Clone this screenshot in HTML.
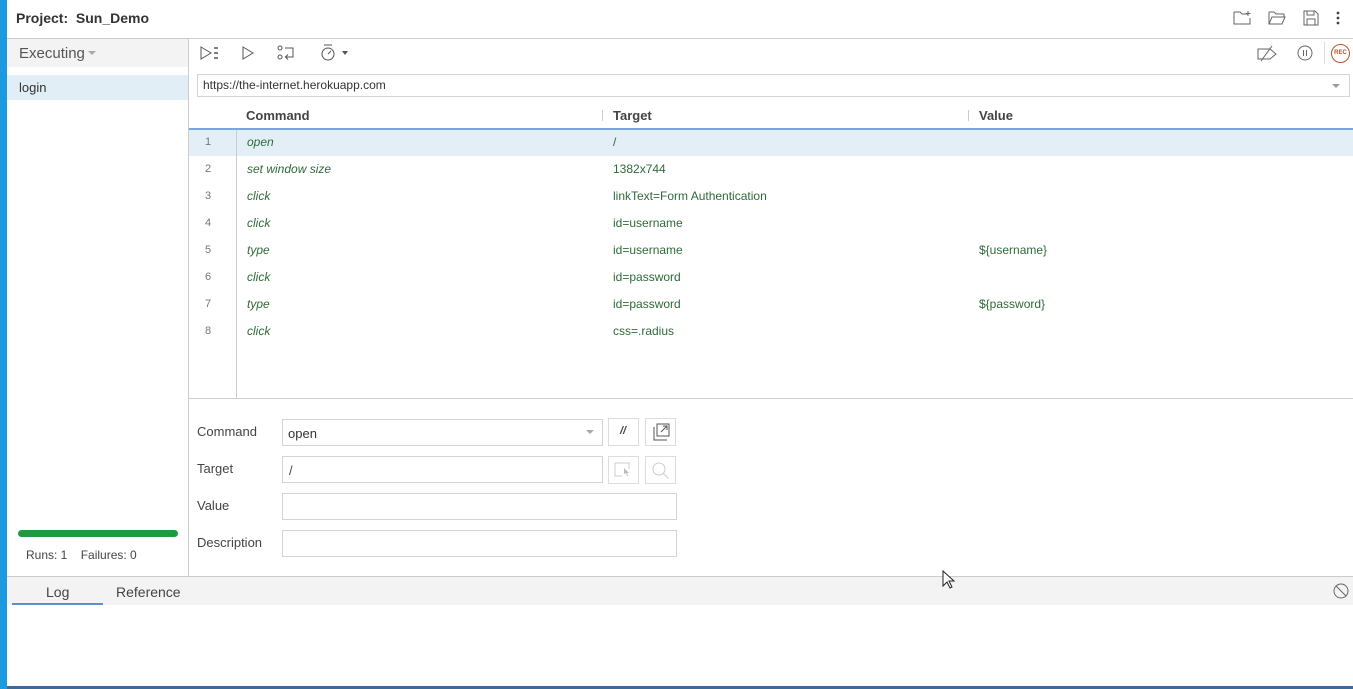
<!DOCTYPE html>
<html><head><meta charset="utf-8"><style>
*{box-sizing:border-box;margin:0;padding:0}
body{width:1353px;height:689px;overflow:hidden;background:#fff;font-family:"Liberation Sans",sans-serif;font-size:12px;color:#333;position:relative}
.a{position:absolute}
.g{color:#2f6a3a}
.row{position:absolute;left:189px;width:1164px;height:27px;line-height:27px}
.row .n{position:absolute;left:0;width:38px;text-align:center;color:#777;font-size:11px}
.row .c{position:absolute;left:58px;font-style:italic}
.row .t{position:absolute;left:424px}
.row .v{position:absolute;left:790px}
.inp{position:absolute;border:1px solid #d4d4d4;background:#fff;height:27px}
.btn{position:absolute;width:31px;height:28px;border:1px solid #ddd;background:#fff}
svg{position:absolute;overflow:visible}
</style></head><body>
<div class="a" style="left:0;top:0;width:7px;height:689px;background:#1b9ae0"></div>
<div class="a" style="left:7px;top:686px;width:1346px;height:3px;background:#3a6b99"></div>
<!-- header -->
<div class="a" style="left:16px;top:10px;font-size:14px;font-weight:bold;color:#333">Project:&nbsp; Sun_Demo</div>
<div class="a" style="left:7px;top:38px;width:1346px;height:1px;background:#ccc"></div>
<svg style="left:1233px;top:10px" width="20" height="16" fill="none" stroke="#666" stroke-width="1"><path d="M1 2h6l2 2h6M1 2v12h16V8M15 1v5M12.5 3.5h5"/></svg>
<svg style="left:1268px;top:10px" width="20" height="16" fill="none" stroke="#666" stroke-width="1"><path d="M1 2h5l2 2h8v3M1 2v12h13l3-7H4L1 14"/></svg>
<svg style="left:1303px;top:10px" width="16" height="16" fill="none" stroke="#666" stroke-width="1"><path d="M1 1h11l3 3v11H1zM4 1v4h7V1M4 15V9h8v6"/></svg>
<svg style="left:1336px;top:11px" width="4" height="14" fill="#444"><circle cx="2" cy="2" r="1.4"/><circle cx="2" cy="7" r="1.4"/><circle cx="2" cy="12" r="1.4"/></svg>
<!-- sidebar -->
<div class="a" style="left:7px;top:39px;width:181px;height:28px;background:#f3f3f3"></div>
<div class="a" style="left:19px;top:45px;font-size:15px;color:#555">Executing</div>
<svg style="left:88px;top:51px" width="8" height="4" fill="#aaa"><path d="M0 0h8L4 4z"/></svg>
<div class="a" style="left:7px;top:75px;width:181px;height:25px;background:#e2eef6"></div>
<div class="a" style="left:19px;top:80px;font-size:13px;color:#333">login</div>
<div class="a" style="left:18px;top:530px;width:160px;height:7px;border-radius:4px;background:#1f9a3c"></div>
<div class="a" style="left:26px;top:548px;font-size:12px;color:#444">Runs: 1&nbsp;&nbsp;&nbsp; Failures: 0</div>
<div class="a" style="left:188px;top:39px;width:1px;height:538px;background:#ccc"></div>
<!-- toolbar -->
<svg style="left:200px;top:46px" width="20" height="14" fill="none" stroke="#555" stroke-width="1"><path d="M1 1l10 6-10 6z"/><path d="M14 2h4M14 7h4M14 12h4" stroke-width="1.5"/></svg>
<svg style="left:242px;top:46px" width="12" height="14" fill="none" stroke="#555"><path d="M1 1l10 6-10 6z"/></svg>
<svg style="left:277px;top:45px" width="18" height="16" fill="none" stroke="#555"><circle cx="3" cy="3" r="2"/><circle cx="3" cy="12" r="2"/><path d="M8 3h8v9H9M11 9.5l-2.5 2.5 2.5 2.5"/></svg>
<svg style="left:320px;top:44px" width="30" height="18" fill="none" stroke="#555"><path d="M4 1h8"/><circle cx="8" cy="10" r="6"/><path d="M8 10l3-3"/><path d="M22 7h6l-3 4z" fill="#555" stroke="none"/></svg>
<svg style="left:1257px;top:45px" width="22" height="16" fill="none" stroke="#666"><path d="M1 4h12l6 5-6 5H1zM4 16L15 1"/></svg>
<svg style="left:1297px;top:45px" width="16" height="16" fill="none" stroke="#666"><circle cx="8" cy="8" r="7"/><path d="M6.5 5v6M9.5 5v6"/></svg>
<div class="a" style="left:1324px;top:42px;width:1px;height:22px;background:#ddd"></div>
<div class="a" style="left:1331px;top:44px;width:19px;height:19px;border:1px solid #b5542e;border-radius:50%;font-size:6px;font-weight:bold;color:#b5542e;text-align:center;line-height:17px">REC</div>
<!-- url -->
<div class="inp" style="left:197px;top:74px;width:1153px;height:23px"></div>
<div class="a" style="left:203px;top:78px;font-size:12px;color:#333">https://the-internet.herokuapp.com</div>
<svg style="left:1332px;top:84px" width="8" height="4" fill="#999"><path d="M0 0h8L4 4z"/></svg>
<!-- table header -->
<div class="a" style="left:246px;top:108px;font-size:13px;font-weight:bold;color:#444">Command</div>
<div class="a" style="left:602px;top:110px;width:1px;height:11px;background:#ccc"></div>
<div class="a" style="left:613px;top:108px;font-size:13px;font-weight:bold;color:#444">Target</div>
<div class="a" style="left:968px;top:110px;width:1px;height:11px;background:#ccc"></div>
<div class="a" style="left:979px;top:108px;font-size:13px;font-weight:bold;color:#444">Value</div>
<div class="a" style="left:189px;top:128px;width:1164px;height:2px;background:#7ba6da"></div>
<div class="a" style="left:189px;top:130px;width:1164px;height:26px;background:#e3eef6"></div>
<div class="a" style="left:236px;top:130px;width:1px;height:268px;background:#ccc"></div>
<div class="row g" style="top:129px"><span class="n">1</span><span class="c">open</span><span class="t">/</span></div>
<div class="row g" style="top:156px"><span class="n">2</span><span class="c">set window size</span><span class="t">1382x744</span></div>
<div class="row g" style="top:183px"><span class="n">3</span><span class="c">click</span><span class="t">linkText=Form Authentication</span></div>
<div class="row g" style="top:210px"><span class="n">4</span><span class="c">click</span><span class="t">id=username</span></div>
<div class="row g" style="top:237px"><span class="n">5</span><span class="c">type</span><span class="t">id=username</span><span class="v">${username}</span></div>
<div class="row g" style="top:264px"><span class="n">6</span><span class="c">click</span><span class="t">id=password</span></div>
<div class="row g" style="top:291px"><span class="n">7</span><span class="c">type</span><span class="t">id=password</span><span class="v">${password}</span></div>
<div class="row g" style="top:318px"><span class="n">8</span><span class="c">click</span><span class="t">css=.radius</span></div>
<div class="a" style="left:189px;top:398px;width:1164px;height:1px;background:#ccc"></div>
<!-- form -->
<div class="a" style="left:197px;top:424px;font-size:13px;color:#444">Command</div>
<div class="a" style="left:197px;top:461px;font-size:13px;color:#444">Target</div>
<div class="a" style="left:197px;top:498px;font-size:13px;color:#444">Value</div>
<div class="a" style="left:197px;top:535px;font-size:13px;color:#444">Description</div>
<div class="inp" style="left:282px;top:419px;width:321px"></div>
<div class="a" style="left:288px;top:426px;font-size:13px;color:#333">open</div>
<svg style="left:586px;top:430px" width="8" height="4" fill="#aaa"><path d="M0 0h8L4 4z"/></svg>
<div class="btn" style="left:608px;top:418px"></div>
<div class="a" style="left:620px;top:425px;font-size:11px;font-style:italic;font-weight:bold;color:#444">//</div>
<div class="btn" style="left:645px;top:418px"></div>
<svg style="left:652px;top:423px" width="18" height="18" fill="none" stroke="#555"><path d="M5 1h12v12H5zM2 4v13h13M9 9l6-6M11 3h4v4"/></svg>
<div class="inp" style="left:282px;top:456px;width:321px"></div>
<div class="a" style="left:289px;top:463px;font-size:13px;color:#444">/</div>
<div class="btn" style="left:608px;top:456px"></div>
<svg style="left:614px;top:462px" width="18" height="16" fill="none" stroke="#ccc"><path d="M1 1h14v6M1 1v13h7"/><path d="M10 6l5 5-2 0 1 3-1 0-1-3-2 1z" fill="#bbb" stroke="none"/></svg>
<div class="btn" style="left:645px;top:456px"></div>
<svg style="left:651px;top:461px" width="18" height="18" fill="none" stroke="#ccc"><circle cx="8" cy="8" r="6"/><path d="M12.5 12.5l5 5"/></svg>
<div class="inp" style="left:282px;top:493px;width:395px"></div>
<div class="inp" style="left:282px;top:530px;width:395px"></div>
<!-- bottom -->
<div class="a" style="left:7px;top:576px;width:1346px;height:1px;background:#ccc"></div>
<div class="a" style="left:7px;top:577px;width:1346px;height:28px;background:#f3f3f3"></div>
<div class="a" style="left:46px;top:584px;font-size:14px;color:#444">Log</div>
<div class="a" style="left:12px;top:603px;width:91px;height:2px;background:#5b8fd0"></div>
<div class="a" style="left:116px;top:584px;font-size:14px;color:#444">Reference</div>
<svg style="left:1333px;top:583px" width="16" height="16" fill="none" stroke="#666"><circle cx="8" cy="8" r="7"/><path d="M3 3l10 10"/></svg>
<svg style="left:942px;top:570px" width="14" height="20"><path d="M1 1v15l4-4 3 6 2-1-3-6h5z" fill="#fff" stroke="#222"/></svg>
</body></html>
